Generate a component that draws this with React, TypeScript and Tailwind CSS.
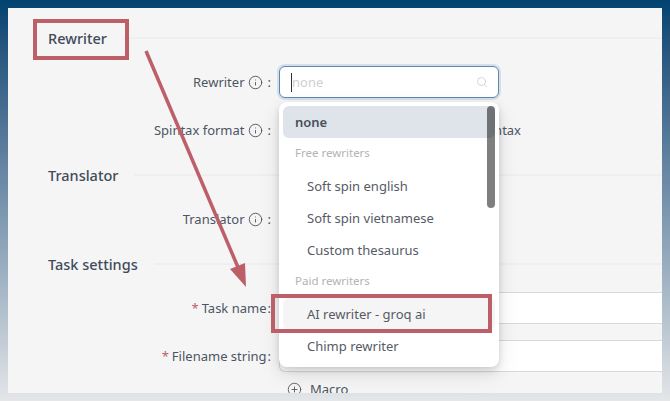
import type { ReactNode } from "react";
import { Info, Search, CirclePlus } from "lucide-react";

const font = { fontFamily: '"Noto Sans", "Open Sans", sans-serif' };

function SectionHead({ title }: { title: string }) {
  return (
    <div className="flex h-6 items-center gap-4 pl-10 text-[14.5px] font-medium text-[#414b5a]">
      <span className="shrink-0 leading-6">{title}</span>
      <div className="h-0.5 grow bg-[#efefef]" />
    </div>
  );
}

function Label({ text, info, required }: { text: string; info?: boolean; required?: boolean }) {
  return (
    <div className="flex w-[263px] shrink-0 items-center justify-end pt-px text-[13px] text-[#4c5564]">
      {required && <span className="mr-[3px] text-[#bd5f69]">*</span>}
      <span>{text}</span>
      {info && <Info className="ml-[3px] size-[15px] text-[#555]" strokeWidth={1.5} />}
      <span className={info ? "ml-[5px]" : "ml-px"}>:</span>
    </div>
  );
}

function Row({ children, className }: { children: ReactNode; className?: string }) {
  return <div className={`flex h-8 items-center gap-2 ${className ?? ""}`}>{children}</div>;
}

function Option({ text }: { text: string }) {
  return <div className="flex h-8 items-center pl-6 pt-px text-[#555b66]">{text}</div>;
}

function GroupLabel({ text }: { text: string }) {
  return <div className="flex h-8 items-center pb-0.5 pl-3 text-[11.5px] text-[#b3b3b3]">{text}</div>;
}

export default function App() {
  return (
    <div
      style={font}
      className="relative h-[401px] w-[670px] overflow-hidden bg-gradient-to-b from-[#004370] to-[#e4e6e8] pl-2 pt-2"
    >
      <div className="h-[385px] w-[654px] overflow-hidden bg-[#f5f5f5] pt-[18px]">
        <SectionHead title="Rewriter" />
        <Row className="mt-4">
          <Label text="Rewriter" info />
          <div className="flex h-8 w-[220px] items-center rounded-md border border-[#5c86b3] bg-white pl-[11px] pr-[10px] shadow-[0_0_0_2px_rgba(92,134,179,0.2)]">
            <span className="h-[19px] w-px bg-[#333]" />
            <span className="grow pt-px text-[13px] text-[#cfcfcf]">none</span>
            <Search className="size-3 text-[#c8c8c8]" strokeWidth={1.5} />
          </div>
        </Row>
        <Row className="mt-4">
          <Label text="Spintax format" info />
          <div className="w-[242px] pt-px text-right text-[13px] text-[#4c5564]">Spintax</div>
        </Row>
        <div className="mt-[17px]">
          <SectionHead title="Translator" />
        </div>
        <Row className="mt-4">
          <Label text="Translator" info />
        </Row>
        <div className="mt-[17px]">
          <SectionHead title="Task settings" />
        </div>
        <Row className="mt-4">
          <Label text="Task name" required />
          <div className="h-8 grow rounded-l-md border border-r-0 border-[#d9d9d9] bg-white" />
        </Row>
        <Row className="mt-4">
          <Label text="Filename string" required />
          <div className="h-8 grow rounded-l-md border border-r-0 border-[#d9d9d9] bg-white" />
        </Row>
        <div className="ml-[279px] mt-[5px] flex h-6 items-center gap-2 pt-px text-[13px] text-[#4c5564]">
          <CirclePlus className="size-[15px] text-[#555]" strokeWidth={1.4} />
          <span>Macro</span>
        </div>
      </div>

      {/* Open dropdown */}
      <div className="absolute left-[279px] top-[102px] h-[265px] w-[220px] overflow-hidden rounded-lg bg-white p-1 text-[13px] shadow-[0_6px_16px_rgba(0,0,0,0.08),0_3px_6px_rgba(0,0,0,0.12),0_9px_28px_rgba(0,0,0,0.05)]">
        <div className="flex h-8 items-center rounded-md bg-[#dee4ea] pl-3 pt-px font-semibold text-[#4a505b]">none</div>
        <GroupLabel text="Free rewriters" />
        <Option text="Soft spin english" />
        <Option text="Soft spin vietnamese" />
        <Option text="Custom thesaurus" />
        <GroupLabel text="Paid rewriters" />
        <div className="flex h-8 items-center rounded-md bg-[#f5f5f5] pl-6 pt-px text-[#555b66]">AI rewriter - groq ai</div>
        <Option text="Chimp rewriter" />
        <div className="absolute right-1 top-1 h-[102px] w-2 rounded bg-black/50" />
      </div>

      {/* Annotations */}
      <div className="absolute left-[33px] top-[19px] h-[41px] w-[96px] border-[4px] border-[#bd5f69]" />
      <div className="absolute left-[271px] top-[294px] h-[39px] w-[221px] border-[4px] border-[#bd5f69]" />
      <svg className="absolute left-0 top-0" width="670" height="401" fill="none">
        <line x1="146" y1="51" x2="240" y2="272" stroke="#bd5f69" strokeWidth="3.5" />
        <polygon points="230,269 245,263 246,287" fill="#bd5f69" />
      </svg>
    </div>
  );
}
